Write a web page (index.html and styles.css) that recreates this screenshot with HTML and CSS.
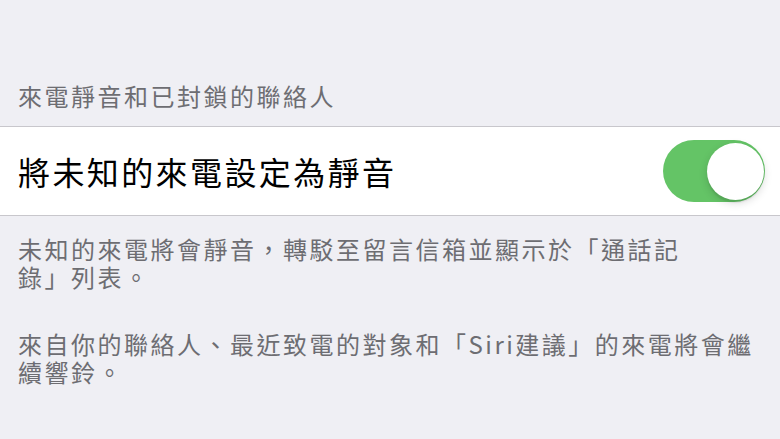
FILE: index.html
```html
<!DOCTYPE html>
<html lang="zh-Hant">
<head>
<meta charset="utf-8">
<title>來電靜音</title>
<link rel="stylesheet" href="styles.css">
</head>
<body>
<div class="page">
  <div class="section-header">來電靜音和已封鎖的聯絡人</div>
  <div class="row">
    <div class="row-title">將未知的來電設定為靜音</div>
    <div class="toggle"><div class="knob"></div></div>
  </div>
  <div class="footer">
    <p class="note">未知的來電將會靜音，轉駁至留言信箱並顯示於「通話記<br>錄」列表。</p>
    <p class="note note-second">來自你的聯絡人、最近致電的對象和「Siri建議」的來電將會繼<br>續響鈴。</p>
  </div>
</div>
</body>
</html>
```

FILE: styles.css
```css
html, body {
  margin: 0;
  padding: 0;
}
body {
  background: #efeff4;
  font-family: "Noto Sans CJK TC", "Noto Sans", sans-serif;
  width: 780px;
  height: 439px;
  overflow: hidden;
}
.page {
  display: flex;
  flex-direction: column;
}
.section-header {
  padding: 82px 18px 16px;
  font-size: 24px;
  line-height: 28px;
  letter-spacing: 2.5px;
  color: #6d6d72;
}
.row {
  display: flex;
  align-items: center;
  justify-content: space-between;
  height: 88px;
  padding: 0 15px 0 18px;
  background: #ffffff;
  border-top: 1px solid #c8c7cc;
  border-bottom: 1px solid #c8c7cc;
}
.row-title {
  font-size: 32px;
  line-height: 40px;
  letter-spacing: 2.4px;
  color: #000000;
}
.toggle {
  width: 102px;
  height: 62px;
  border-radius: 31px;
  background: #64c466;
  display: flex;
  align-items: center;
  justify-content: flex-end;
  padding: 0 1.5px;
  box-sizing: border-box;
}
.knob {
  width: 57px;
  height: 57px;
  border-radius: 50%;
  background: #ffffff;
  box-shadow: 0 3px 8px rgba(0, 0, 0, 0.15), 0 3px 1px rgba(0, 0, 0, 0.06);
}
.footer {
  padding: 19px 18px 0;
}
.note {
  margin: 0;
  font-size: 24px;
  line-height: 28px;
  letter-spacing: 2.5px;
  color: #6d6d72;
}
.note-second {
  margin-top: 39px;
}
```
